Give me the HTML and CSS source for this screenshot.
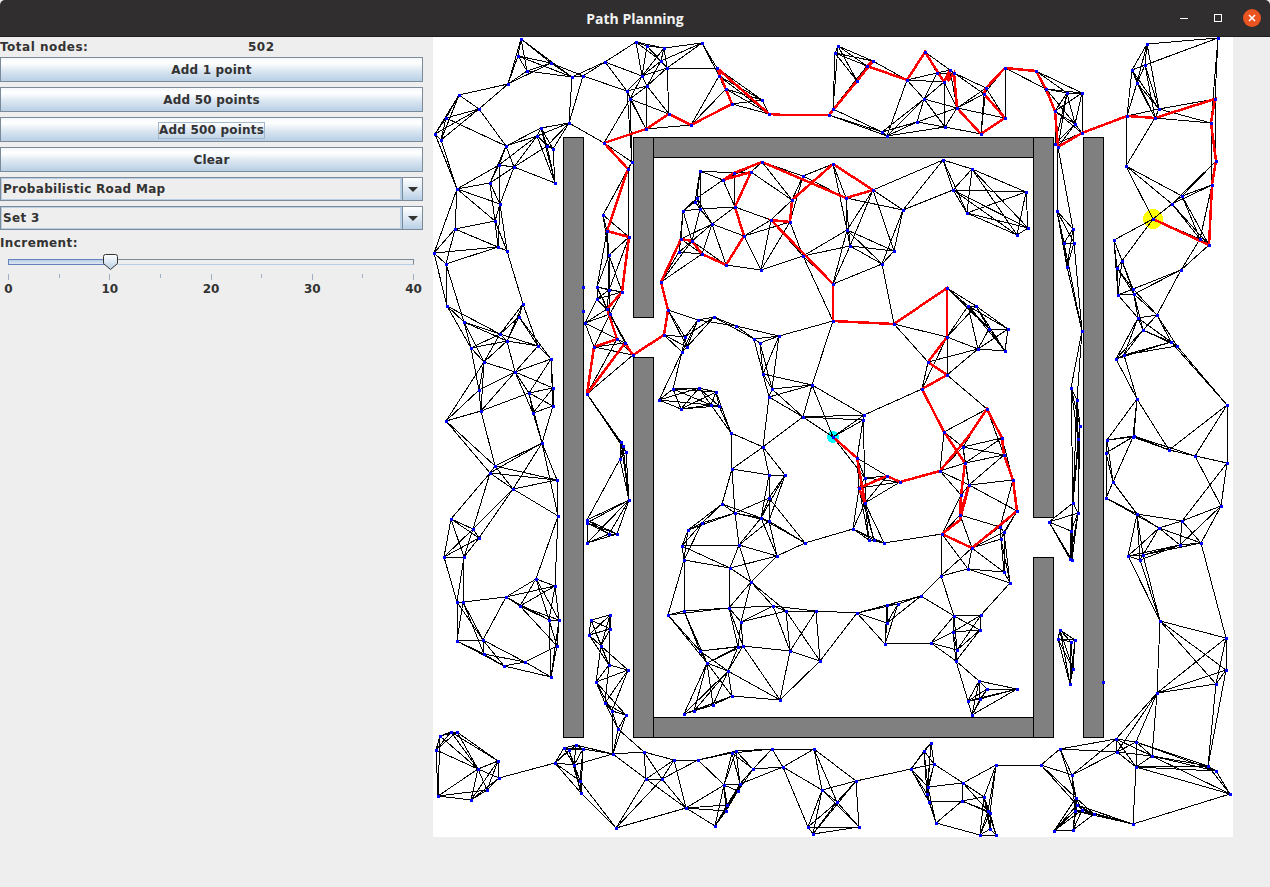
FILE: index.html
```html
<!DOCTYPE html>
<html lang="en">
<head>
    <meta charset="UTF-8">
    <meta name="viewport" content="width=device-width, initial-scale=1.0">
    <title>Path Planning</title>
    <link rel="stylesheet" href="styles.css">
</head>
<body>
    <header class="titlebar">
        <span class="titlebar-name">Path Planning</span>
        <div class="titlebar-controls">
            <svg class="min-icon" width="14" height="14" viewBox="0 0 14 14"><path d="M3 7.500h8" stroke="#fff" fill="none"/></svg>
            <svg width="14" height="14" viewBox="0 0 14 14"><rect x="3.500" y="3.500" width="7" height="7" stroke="#fff" fill="none"/></svg>
            <span class="close-btn">
                <svg width="18" height="18" viewBox="0 0 18 18"><path d="M6 6l6 6M12 6l-6 6" stroke="#fff" stroke-width="1.500" fill="none"/></svg>
            </span>
        </div>
    </header>
    <div class="window">
        <aside class="panel">
            <div class="total-row"><span>Total nodes:</span><span>502</span></div>
            <div class="button-list">
                <button type="button" class="metal-btn">Add 1 point</button>
                <button type="button" class="metal-btn">Add 50 points</button>
                <button type="button" class="metal-btn"><span class="focus-ring">Add 500 points</span></button>
                <button type="button" class="metal-btn">Clear</button>
            </div>
            <div class="combo-list">
                <div class="combo"><span class="combo-value">Probabilistic Road Map</span><span class="combo-arrow"></span></div>
                <div class="combo"><span class="combo-value">Set 3</span><span class="combo-arrow"></span></div>
            </div>
            <div class="increment-label">Increment:</div>
            <div class="slider">
                <div class="slider-track">
                    <div class="slider-fill"></div>
                    <svg class="slider-thumb" width="15" height="16" viewBox="0 0 15 16">
                        <defs>
                            <linearGradient id="thumbFill" x1="0" y1="0" x2="0" y2="1">
                                <stop offset="0" stop-color="#ffffff"/>
                                <stop offset="1" stop-color="#b8cfe5"/>
                            </linearGradient>
                        </defs>
                        <path d="M0.500 2.500q0-2 2-2h10q2 0 2 2v7l-7 6-7-6z" fill="url(#thumbFill)" stroke="#333"/>
                    </svg>
                </div>
                <div class="tick-row">
                    <i class="tick major"></i><i class="tick"></i><i class="tick major"></i><i class="tick"></i><i class="tick major"></i><i class="tick"></i><i class="tick major"></i><i class="tick"></i><i class="tick major"></i>
                </div>
                <div class="tick-labels">
                    <span>0</span><span>10</span><span>20</span><span>30</span><span>40</span>
                </div>
            </div>
        </aside>
        <main class="board">
            <svg id="map" width="800" height="800" viewBox="0 0 800 800" shape-rendering="crispEdges">
                <g class="walls">
                    <rect x="130.500" y="100.500" width="20" height="600"/>
                    <rect x="200.500" y="100.500" width="20" height="180"/>
                    <rect x="220.500" y="100.500" width="380" height="20"/>
                    <rect x="600.500" y="100.500" width="20" height="380"/>
                    <rect x="650.500" y="100.500" width="20" height="600"/>
                    <rect x="200.500" y="320.500" width="20" height="380"/>
                    <rect x="220.500" y="680.500" width="380" height="20"/>
                    <rect x="600.500" y="520.500" width="20" height="180"/>
                </g>
                <circle cx="720" cy="182" r="10" fill="#ffff00"/>
                <circle cx="400" cy="400" r="6" fill="#00ffff"/>
                <g id="edges" class="edges"></g>
                <path class="route" d="M720 182L776 208 779 148 783 124 778 86 782 62 722 81 694 79 649 96 625 110 622 74 613 52 603 34 572 31 553 51 551 57 572 81 548 97 524 71 521 36 515 44 517 33 511 45 492 15 474 43 434 29 440 24 424 44 396 78 351 78 336 77 284 31 299 67 258 88 236 77 213 92 171 106 195 132 174 194 196 200 189 255 174 272 184 302 161 310 154 357 192 306 200 318 231 298 235 273 228 245 248 202 259 204 269 217 293 228 311 199 302 170 318 135 290 143 301 136 329 125 413 161 440 153 400 127 359 163 357 185 338 183 400 247 400 284 461 287 514 251 514 300 495 325 514 338 489 352 511 395 532 426 528 458 527 478 536 448 527 483 509 497 539 511 584 474 580 443 571 418 569 401 554 372 535 400 507 434 467 445 454 439 426 451 432 466 424 421 400 400"/>
                <g id="nodes" class="nodes"></g>
            </svg>
        </main>
    </div>
    <script src="graph.js"></script>
</body>
</html>
```

FILE: styles.css
```css
* {
    box-sizing: border-box;
}

html,
body {
    margin: 0;
    height: 100%;
    overflow: hidden;
    background-color: #eeeeee;
}

body {
    font-family: "DejaVu Sans", sans-serif;
    font-size: 12px;
    font-weight: bold;
    color: #333333;
}

.titlebar {
    height: 37px;
    background-color: #302e2e;
    border-bottom: 1px solid #1f1e1e;
    border-radius: 5px 5px 0 0;
    display: flex;
    align-items: center;
    justify-content: center;
    position: relative;
}

.titlebar-name {
    font-family: "Open Sans", sans-serif;
    font-size: 14px;
    color: #f2f2f2;
}

/* window buttons lie over the bar, the title stays centred */
.titlebar-controls {
    position: absolute;
    right: 9px;
    top: 9px;
    display: flex;
    align-items: center;
    gap: 18px;
}

.min-icon {
    margin-right: 2px;
}

.close-btn {
    width: 18px;
    height: 18px;
    border-radius: 50%;
    background-color: #e95420;
    display: block;
}

.close-btn svg {
    display: block;
}

.window {
    display: flex;
}

.panel {
    width: 433px;
    flex-shrink: 0;
    padding-right: 10px;
}

.total-row {
    height: 20px;
    display: grid;
    grid-template-columns: 248px 1fr;
    align-items: center;
    letter-spacing: 0.5px;
}

.button-list,
.combo-list {
    display: flex;
    flex-direction: column;
}

.button-list {
    gap: 5px;
}

.metal-btn {
    height: 25px;
    padding: 0;
    font: inherit;
    letter-spacing: 0.2px;
    color: inherit;
    border: 1px solid #7a8a99;
    background: linear-gradient(#f4f8fc 0%, #ffffff 22%, #dce7f2 55%, #b8cfe5 100%);
    cursor: pointer;
}

.focus-ring {
    border: 1px solid #a3b8cc;
    padding: 0 0 1px;
}

.combo-list {
    margin-top: 5px;
    gap: 5px;
}

.combo {
    height: 24px;
    display: flex;
    border: 1px solid #7a8a99;
    letter-spacing: 0.3px;
}

.combo-value {
    flex: 1;
    padding-left: 1px;
    border: 2px solid #b8cfe5;
    border-width: 1px 2px 1px 1px;
    display: flex;
    align-items: center;
}

.combo-arrow {
    width: 20px;
    border-left: 1px solid #7a8a99;
    background: linear-gradient(#ffffff 0%, #dce7f2 55%, #b8cfe5 100%);
    display: flex;
    align-items: center;
    justify-content: center;
}

.combo-arrow::after {
    content: "";
    border-left: 5px solid transparent;
    border-right: 5px solid transparent;
    border-top: 5px solid #333333;
}

.increment-label {
    margin-top: 5px;
    height: 16px;
    line-height: 16px;
    letter-spacing: 0.4px;
}

.slider {
    padding: 6px 9px 0 8px;
    margin-top: 1px;
}

.slider-track {
    height: 6px;
    margin-top: 1px;
    border: 1px solid #7a8a99;
    border-bottom-color: #b8cfe5;
    background-color: #eeeeee;
    position: relative;
}

.slider-fill {
    width: 102px;
    height: 100%;
    background: linear-gradient(#b8cfe5, #dce7f2);
    box-shadow: 0 0 0 1px #6382bf;
}

.slider-thumb {
    position: absolute;
    left: 94px;
    top: -6px;
}

.tick-row {
    display: flex;
    justify-content: space-between;
    align-items: flex-start;
    margin-top: 9px;
}

.tick {
    width: 1px;
    height: 4px;
    background-color: #9fb0c2;
}

.tick.major {
    height: 6px;
}

.tick-labels {
    display: flex;
    justify-content: space-between;
    margin-top: 2px;
}

.tick-labels span {
    width: 1px;
    display: flex;
    justify-content: center;
}

.board {
    width: 800px;
    height: 800px;
    background-color: #ffffff;
}

#map {
    display: block;
}

.walls rect {
    fill: #808080;
    stroke: #000000;
}

.edges line {
    stroke: #000000;
    stroke-width: 1;
}

.route {
    fill: none;
    stroke: #ff0000;
    stroke-width: 2.500;
}

.nodes rect {
    fill: #0000ff;
}
```

FILE: graph.js
```js
// sampled points, read off the map
var points = [
    88,2, 85,19, 94,34, 118,26, 75,47, 139,40, 150,39, 172,25, 203,5, 214,9, 231,11, 228,24, 234,31, 269,6,
    209,39, 214,49, 194,54, 197,62, 236,77, 213,92, 258,88, 284,31, 286,39, 293,52, 299,67, 329,63, 336,77, 396,78,
    26,58, 46,72, 13,81, 2,97, 8,103, 73,109, 108,91, 104,99, 136,86, 114,109, 120,112, 122,146, 66,128, 81,130,
    57,146, 24,152, 67,167, 62,184, 22,192, 65,210, 74,214, 1,216, 13,227, 14,269, 90,267, 86,280, 31,285, 67,297,
    74,304, 38,311, 105,309, 51,325, 118,322, 82,335, 120,351, 46,353, 96,356, 120,369, 48,374, 100,376, 13,384,
    171,106, 199,125, 195,132, 170,178, 174,194, 196,200, 176,218, 150,250, 164,250, 176,253, 189,255, 164,262,
    150,274, 174,272, 177,277, 152,286, 184,302, 192,306, 161,310, 200,318, 154,357,
    267,134, 290,143, 301,136, 318,135, 329,125, 370,139, 400,127, 264,161, 262,165, 267,172, 250,174, 302,170,
    359,163, 338,183, 357,185, 279,187, 311,199, 248,202, 259,204, 246,215, 269,217, 293,228, 328,233, 370,219,
    228,245, 400,247, 235,273, 265,283, 281,280, 303,289, 231,298, 252,300, 254,310, 249,315, 321,302, 327,306,
    346,299, 400,284, 330,337, 339,352, 379,348, 336,360, 370,380, 226,363, 240,352, 266,351, 283,355, 278,368,
    286,369, 248,372, 298,396, 400,400,
    405,9, 402,16, 440,24, 434,29, 424,44, 400,72, 449,95, 454,99, 474,43, 492,15, 504,36, 517,33, 521,36, 511,45,
    491,62, 524,71, 484,85, 512,90, 548,97, 572,81, 551,57, 553,51, 572,31, 603,34, 613,52, 634,56, 649,56, 622,74,
    642,87, 649,96, 625,110, 622,107, 694,79, 722,81, 726,72, 782,62, 778,86, 783,124, 779,148, 776,208, 767,202,
    739,167, 749,159, 720,182, 693,129, 699,33, 712,28, 714,7, 785,1, 704,46, 681,203, 689,224, 684,231, 685,258,
    700,252, 701,257, 748,233, 724,278, 705,281, 710,293, 738,305, 744,309, 683,322, 691,318, 704,362, 794,368, 701,399,
    624,174, 640,192, 631,206, 641,206, 634,230, 649,294, 638,351, 644,363, 647,389,
    510,123, 539,132, 520,153, 534,176, 593,155, 595,191, 584,198, 470,173, 440,153, 413,161, 414,193, 417,209,
    461,214, 449,227, 461,287, 514,251, 535,269, 543,269, 556,292, 575,292, 572,314, 545,312, 514,300, 495,325,
    514,338, 489,352, 554,372, 511,395, 431,378, 430,383,
    109,406, 62,429, 57,436, 124,443, 80,452, 125,479, 18,482, 40,492, 46,501, 11,520, 31,520, 103,542, 122,549,
    24,565, 30,565, 73,560, 87,569, 116,583, 126,583, 24,604, 50,603, 124,609, 51,617, 92,625, 71,629, 118,640,
    188,405, 190,409, 193,415, 187,422, 196,463, 154,483, 154,486, 176,497, 184,497, 154,506,
    158,583, 177,578, 177,592, 156,598, 168,609, 176,628, 195,633, 163,645, 172,666, 179,674, 193,678, 185,692, 180,717,
    7,699, 18,695, 24,695, 3,713, 65,724, 45,732, 66,741, 54,753, 5,759, 38,763, 122,726, 131,711, 136,713, 143,708,
    150,712, 141,728, 147,744, 148,756, 211,715, 241,723, 265,723, 213,742, 229,742, 253,771, 183,791, 282,789,
    299,716, 303,714, 339,712, 381,712, 320,732, 350,730, 291,748, 307,747, 305,754, 294,768, 293,774, 389,753,
    375,790, 380,797,
    299,432, 330,410, 336,438, 352,438, 336,461, 289,467, 302,476, 328,481, 336,484, 269,486, 255,493, 372,506,
    249,509, 306,508, 344,519, 251,523, 297,531, 318,545, 235,578, 251,574, 296,571, 340,569, 308,585, 353,574,
    383,574, 267,614, 305,610, 310,609, 357,614, 387,624, 274,626, 295,634, 299,659, 347,663, 280,668, 261,674, 251,677,
    424,421, 432,441, 454,439, 467,445, 426,451, 432,466, 420,492, 436,503, 441,503, 451,506, 507,434, 509,497,
    527,478, 528,458, 536,448, 532,426, 530,410, 539,511, 567,490, 571,495, 568,502, 584,474, 580,443, 571,418,
    569,401, 535,532, 571,535, 577,546, 508,539, 488,559, 465,567, 454,568, 454,586, 424,576, 452,607, 498,606,
    521,579, 548,578, 547,593, 520,595, 524,613, 523,624, 546,644, 554,652, 584,652, 547,662, 535,664, 539,678,
    645,402, 640,466, 645,476, 616,485, 638,494, 639,523, 637,522, 627,593, 625,602, 638,605, 642,603, 640,632, 637,647, 670,645,
    674,403, 700,400, 673,416, 736,413, 762,419, 794,426, 680,445, 673,461, 788,469, 704,477, 749,484, 726,491,
    768,506, 747,508, 695,519, 710,518, 707,523, 727,584, 793,601, 793,633, 783,647, 724,656, 683,702, 703,705,
    627,712, 684,715, 719,719, 608,728, 563,728, 639,738, 703,730, 775,729, 783,734, 797,757, 700,787, 643,761,
    644,768, 661,777, 649,773, 642,774, 621,794, 640,793,
    498,706, 491,714, 478,732, 501,727, 495,750, 494,757, 496,765, 503,786, 530,746, 529,764, 551,760, 555,774,
    557,776, 557,792, 547,798, 563,798, 423,744, 404,765, 426,790
];

var walls = [
    [130, 100, 150, 700], [200, 100, 220, 280], [220, 100, 600, 120], [600, 100, 620, 480],
    [650, 100, 670, 700], [200, 320, 220, 700], [220, 680, 600, 700], [600, 520, 620, 700]
];

var NEIGHBOURS = 5;
var SVG_NS = 'http://www.w3.org/2000/svg';

// clips the segment against the wall, touching counts as a hit
function hitsWall(ax, ay, bx, by, w) {
    var t0 = 0, t1 = 1;
    var dx = bx - ax, dy = by - ay;
    var tests = [[-dx, ax - w[0]], [dx, w[2] - ax], [-dy, ay - w[1]], [dy, w[3] - ay]];
    for (var i = 0; i < 4; i++) {
        var p = tests[i][0], q = tests[i][1];
        if (p === 0) {
            if (q < 0) return false;
        } else {
            var r = q / p;
            if (p < 0) t0 = Math.max(t0, r);
            else t1 = Math.min(t1, r);
            if (t0 > t1) return false;
        }
    }
    return true;
}

function isFree(a, b) {
    return !walls.some(function (w) {
        return hitsWall(a[0], a[1], b[0], b[1], w);
    });
}

function addShape(parent, tag, attrs) {
    var el = document.createElementNS(SVG_NS, tag);
    for (var key in attrs) {
        el.setAttribute(key, attrs[key]);
    }
    parent.appendChild(el);
}

var nodes = [];
for (var i = 0; i < points.length; i += 2) {
    nodes.push([points[i], points[i + 1]]);
}

var edgeGroup = document.getElementById('edges');
var nodeGroup = document.getElementById('nodes');

// the nearest neighbours are picked among the ones a straight line can reach
nodes.forEach(function (a) {
    addShape(nodeGroup, 'rect', { x: a[0] - 1, y: a[1] - 1, width: 3, height: 3 });
    nodes
        .filter(function (b) { return b !== a && isFree(a, b); })
        .sort(function (b, c) {
            return Math.hypot(b[0] - a[0], b[1] - a[1]) - Math.hypot(c[0] - a[0], c[1] - a[1]);
        })
        .slice(0, NEIGHBOURS)
        .forEach(function (b) {
            addShape(edgeGroup, 'line', { x1: a[0], y1: a[1], x2: b[0], y2: b[1] });
        });
});
```
